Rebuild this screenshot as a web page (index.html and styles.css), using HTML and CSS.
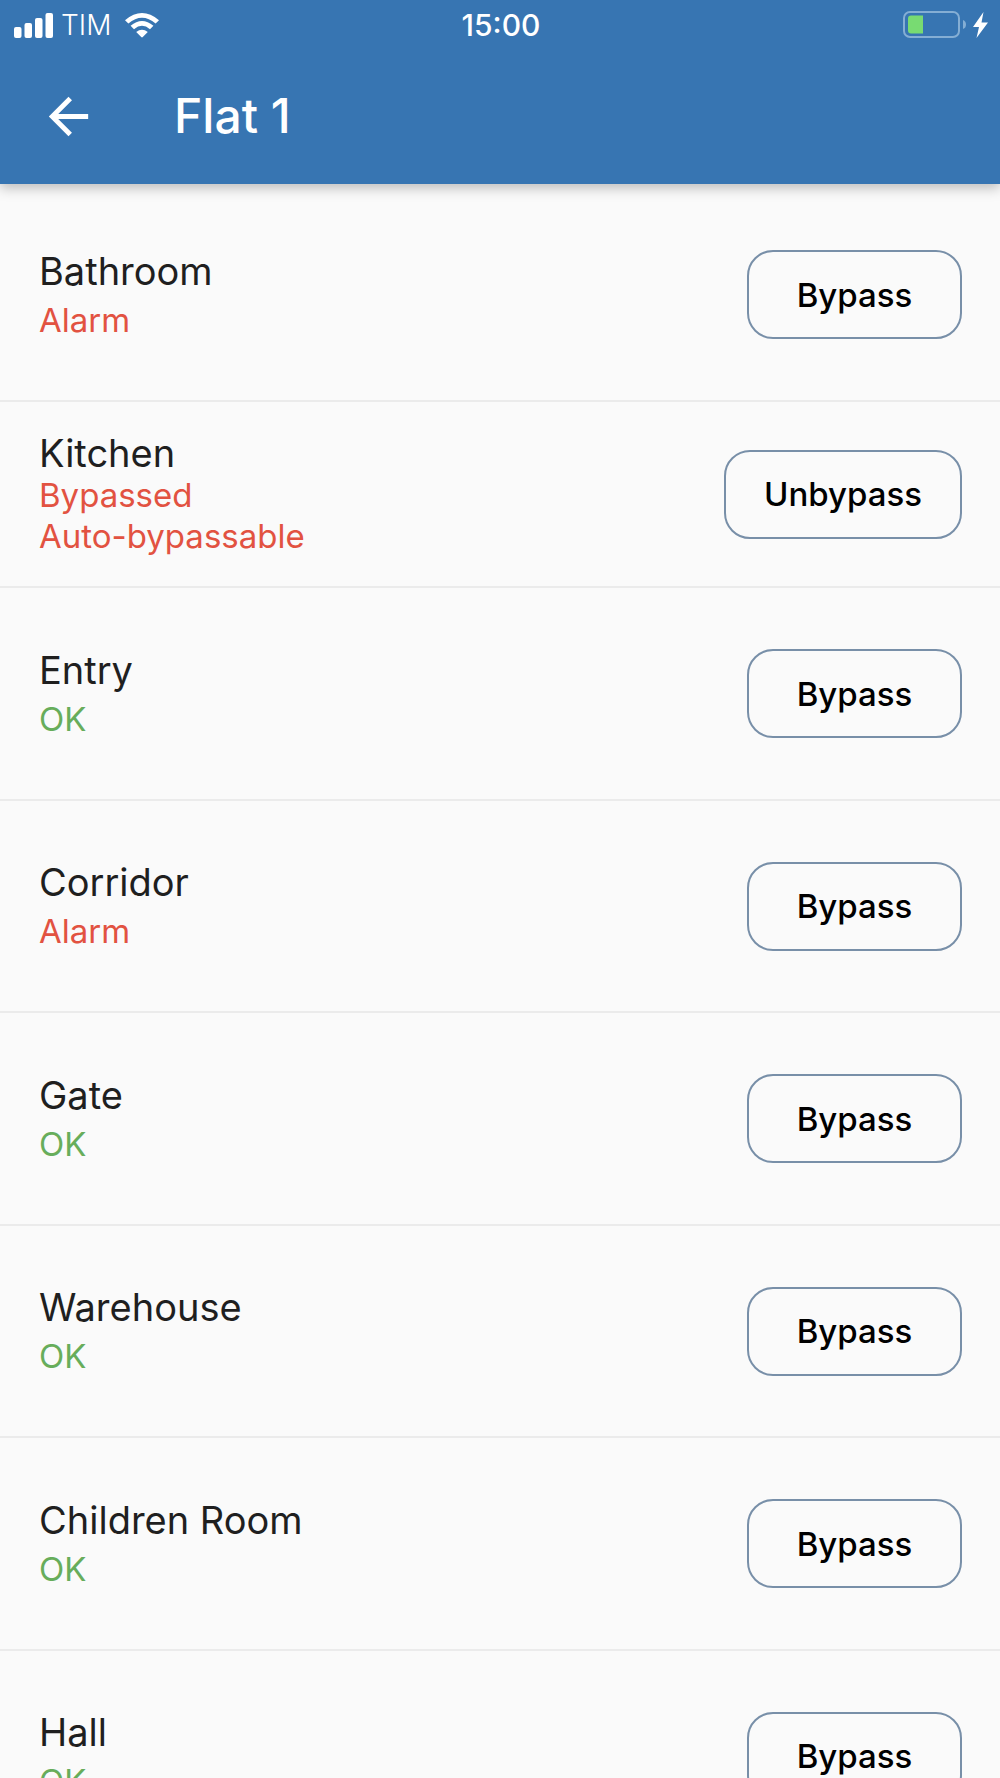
FILE: index.html
```html
<!DOCTYPE html>
<html lang="en">
<head>
<meta charset="utf-8">
<meta name="viewport" content="width=device-width, initial-scale=1">
<title>Flat 1</title>
<link rel="stylesheet" href="styles.css">
</head>
<body>
<header class="app-header">
  <div class="status-bar">
    <div class="status-left">
      <svg class="signal" viewBox="0 0 39 25" width="39" height="25" aria-hidden="true">
        <rect x="0" y="14" width="7.500" height="11" rx="2"/>
        <rect x="10.500" y="10" width="7.500" height="15" rx="2"/>
        <rect x="21" y="5" width="7.500" height="20" rx="2"/>
        <rect x="31.500" y="0" width="7.500" height="25" rx="2"/>
      </svg>
      <span class="carrier">TIM</span>
      <svg class="wifi" viewBox="0 0 34 25" width="34" height="25" aria-hidden="true">
        <path d="M0 7.200Q17 -7.200 34 7.200L30.600 10.600Q17 -1.200 3.400 10.600Z"/>
        <path d="M5.600 12.800Q17 3 28.400 12.800L25 16.200Q17 9.400 9 16.200Z"/>
        <path d="M11.200 19Q17 14.600 22.800 19L17.800 24Q17 24.800 16.200 24Z"/>
      </svg>
    </div>
    <time class="clock">15:00</time>
    <div class="status-right">
      <svg class="battery" viewBox="0 0 64 28" width="64" height="28" aria-hidden="true">
        <rect x="1" y="1" width="55" height="25" rx="6" fill="none" stroke="#84aed4" stroke-width="2"/>
        <path d="M60 9Q63 10 63 13.500T60 18Z" fill="#84aed4"/>
        <path d="M8 4.500H20V22.500H8Q5 22.500 5 19.500V7.500Q5 4.500 8 4.500Z" fill="#78db72"/>
      </svg>
      <svg class="bolt" viewBox="0 0 15 26" width="15" height="26" aria-hidden="true">
        <path d="M10.500 0L0 15H6L3.500 26L15 10.500H8.500Z"/>
      </svg>
    </div>
  </div>
  <div class="toolbar">
    <button class="back" type="button" aria-label="Back">
      <svg viewBox="0 0 24 24" width="59" height="59" aria-hidden="true"><path d="M20 11H7.830l5.590-5.590L12 4l-8 8 8 8 1.410-1.410L7.830 13H20z"/></svg>
    </button>
    <h1 class="title">Flat 1</h1>
  </div>
</header>
<main>
  <ul class="zones">
    <li class="zone">
      <div class="info"><h2 class="name">Bathroom</h2><p class="state alert">Alarm</p></div>
      <button class="action" type="button">Bypass</button>
    </li>
    <li class="zone compact">
      <div class="info"><h2 class="name">Kitchen</h2><p class="state alert">Bypassed<br>Auto-bypassable</p></div>
      <button class="action" type="button">Unbypass</button>
    </li>
    <li class="zone">
      <div class="info"><h2 class="name">Entry</h2><p class="state ok">OK</p></div>
      <button class="action" type="button">Bypass</button>
    </li>
    <li class="zone">
      <div class="info"><h2 class="name">Corridor</h2><p class="state alert">Alarm</p></div>
      <button class="action" type="button">Bypass</button>
    </li>
    <li class="zone">
      <div class="info"><h2 class="name">Gate</h2><p class="state ok">OK</p></div>
      <button class="action" type="button">Bypass</button>
    </li>
    <li class="zone">
      <div class="info"><h2 class="name">Warehouse</h2><p class="state ok">OK</p></div>
      <button class="action" type="button">Bypass</button>
    </li>
    <li class="zone">
      <div class="info"><h2 class="name">Children Room</h2><p class="state ok">OK</p></div>
      <button class="action" type="button">Bypass</button>
    </li>
    <li class="zone">
      <div class="info"><h2 class="name">Hall</h2><p class="state ok">OK</p></div>
      <button class="action" type="button">Bypass</button>
    </li>
  </ul>
</main>
</body>
</html>
```
FILE: styles.css
```css
* {
  box-sizing: border-box;
}

html {
  height: 100%;
}

body {
  height: 100%;
  margin: 0;
  display: flex;
  flex-direction: column;
  background: #fafafa;
  color: #1f1f1f;
  font-family: Inter, "Liberation Sans", sans-serif;
}

button {
  font: inherit;
  cursor: pointer;
}

svg {
  display: block;
  flex: none;
}

.app-header {
  flex: none;
  position: relative;
  background: #3775b2;
  color: #fff;
  fill: #fff;
  box-shadow: 0 4px 12px rgba(0, 0, 0, 0.25);
}

.status-bar {
  display: grid;
  grid-template-columns: 1fr auto 1fr;
  align-items: center;
  height: 50px;
  padding: 0 12px 0 14px;
}

.status-left,
.status-right {
  display: flex;
  align-items: center;
}

.status-left {
  gap: 8px;
}

.status-right {
  justify-content: flex-end;
  gap: 6px;
}

.carrier {
  font-size: 28px;
  font-weight: 300;
  line-height: 32px;
}

.wifi {
  margin-left: 6px;
}

.clock {
  font-size: 30px;
  font-weight: 500;
  line-height: 32px;
}

.toolbar {
  display: flex;
  align-items: center;
  gap: 76px;
  height: 134px;
  padding: 0 39px 2px;
}

.back {
  padding: 0;
  border: 0;
  background: none;
  fill: inherit;
}

.title {
  margin: 0;
  font-size: 48px;
  font-weight: 500;
  line-height: 56px;
}

main {
  flex: 1;
  min-height: 0;
  overflow-y: auto;
  scrollbar-width: none;
}

.zones {
  margin: 0;
  padding: 5px 0 0;
  list-style: none;
}

.zone {
  display: flex;
  align-items: center;
  justify-content: space-between;
  min-height: 213px;
  padding: 0 38px 0 39px;
  border-bottom: 2px solid #ebebeb;
}

.zone:nth-child(even) {
  min-height: 212px;
}

.zone.compact {
  min-height: 186px;
}

.name {
  margin: 0 0 7px;
  font-size: 38px;
  font-weight: 400;
  line-height: 44px;
}

.state {
  margin: 0;
  font-size: 33px;
  line-height: 41px;
}

.compact .name {
  margin-bottom: 0;
}

.alert {
  color: #e25241;
}

.ok {
  color: #67ad5b;
}

.action {
  min-width: 215px;
  height: 89px;
  padding: 0 38px;
  border: 2px solid #788fa8;
  border-radius: 26px;
  background: transparent;
  color: #000;
  font-size: 33px;
  font-weight: 500;
  line-height: 40px;
}
```
